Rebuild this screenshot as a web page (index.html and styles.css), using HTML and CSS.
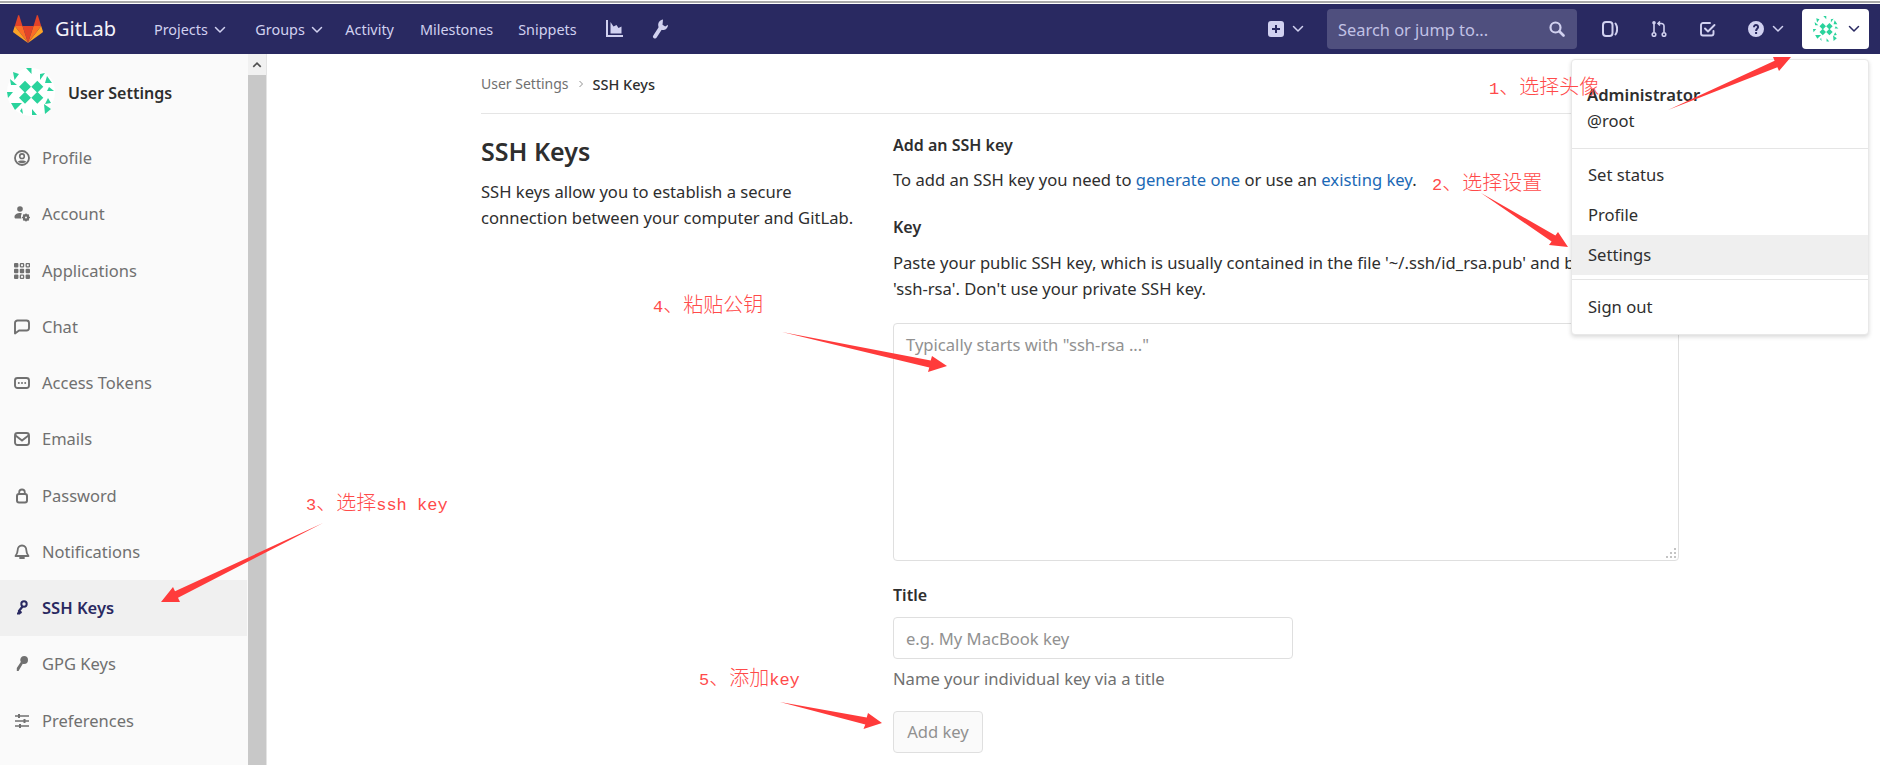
FILE: index.html
```html
<!DOCTYPE html>
<html lang="en">
<head>
    <meta charset="UTF-8">
    <meta name="viewport" content="width=device-width, initial-scale=1.0">
    <title>SSH Keys · User Settings · GitLab</title>
    <link rel="stylesheet" href="styles.css">
</head>
<body>
    <svg class="defs" width="0" height="0">
        <symbol id="chevron" viewBox="0 0 16 16"><path d="M3.500 5.500 8 10l4.500-4.500" fill="none" stroke="currentColor" stroke-width="1.500" stroke-linecap="round" stroke-linejoin="round"/></symbol>
        <symbol id="identicon" viewBox="0 0 48 48">
            <circle cx="24" cy="24" r="24" fill="#fff"/>
            <g fill="#2ad39c">
                <path d="M18 12.700 24 18.700 18 24.700 12 18.700ZM30.300 12.700 36.300 18.700 30.300 24.700 24.300 18.700ZM18 23.700 24 29.700 18 35.700 12 29.700ZM30.300 23.700 36.300 29.700 30.300 35.700 24.300 29.700Z"/>
                <path d="M19 0h5.500v6ZM6 4l6 2-4.500 6ZM33 6l5-1-5 7ZM40 8l5 7h-7ZM3 11l7 6h-6ZM42 19l5 4h-7ZM0 24h6l-5 6ZM41 30l3 5-6 1ZM4 35h11l-7 7ZM37 36l7 5-6 5ZM25 41l5 6h-5ZM15 40l-2 3 3 3Z"/>
            </g>
        </symbol>
    </svg>

    <div class="top-strip"></div>

    <header class="navbar">
        <a class="brand">
            <svg class="brand-logo" viewBox="0 0 30 28">
                <path fill="#e24329" d="M15 28 20.500 11h-11Z"/>
                <path fill="#fc6d26" d="M15 28 9.500 11H1.800Z"/>
                <path fill="#fca326" d="M1.800 11 .1 16.200c-.2.500 0 1 .4 1.300L15 28Z"/>
                <path fill="#e24329" d="M1.800 11h7.700L6.200.6c-.2-.500-.9-.500-1.100 0Z"/>
                <path fill="#fc6d26" d="M15 28 20.500 11h7.700Z"/>
                <path fill="#fca326" d="M28.200 11l1.700 5.200c.2.500 0 1-.4 1.300L15 28Z"/>
                <path fill="#e24329" d="M28.200 11h-7.700L23.800.6c.2-.500.9-.500 1.100 0Z"/>
            </svg>
            <span class="brand-name">GitLab</span>
        </a>
        <nav class="nav-links">
            <a class="nav-link nav-projects">Projects <svg class="chev"><use href="#chevron"/></svg></a>
            <a class="nav-link nav-groups">Groups <svg class="chev"><use href="#chevron"/></svg></a>
            <a class="nav-link nav-activity">Activity</a>
            <a class="nav-link">Milestones</a>
            <a class="nav-link">Snippets</a>
            <a class="nav-glyph nav-chart">
                <svg class="glyph-chart" viewBox="0 0 18 18"><path fill="none" stroke="currentColor" stroke-width="2" d="M2 0v16h16"/><path fill="currentColor" d="M5.500 2 8.500 6.500 11.500 5l2 3 3-1.500V13.500H5.500Z"/></svg>
            </a>
            <a class="nav-glyph nav-wrench">
                <svg class="glyph-wrench" viewBox="0 0 16 20"><path d="M3 17.500 8.800 8.500" stroke="currentColor" stroke-width="4" stroke-linecap="round"/><path fill="currentColor" d="M11 .5C8 .9 6 3.300 6.200 6.200c.1 2.800 2.600 5 5.500 4.800 2.600-.2 4.300-2.500 4.300-5.200l-2.800 1.700-2.700-1.800.3-2.800Z"/></svg>
            </a>
        </nav>
        <div class="nav-right">
            <a class="nav-plus">
                <svg class="nav-icon" viewBox="0 0 16 16"><path fill="currentColor" fill-rule="evenodd" d="M3 0h10a3 3 0 0 1 3 3v10a3 3 0 0 1-3 3H3a3 3 0 0 1-3-3V3a3 3 0 0 1 3-3Zm4 4v3H4v2h3v3h2V9h3V7H9V4Z"/></svg>
                <svg class="chev"><use href="#chevron"/></svg>
            </a>
            <div class="search">
                <span class="search-text">Search or jump to...</span>
                <svg class="search-icon" viewBox="0 0 16 16"><circle cx="6.500" cy="6.500" r="5" fill="none" stroke="currentColor" stroke-width="2.200"/><path d="m10.500 10.500 4 4" stroke="currentColor" stroke-width="2.600" stroke-linecap="round"/></svg>
            </div>
            <a class="nav-btn">
                <svg class="nav-icon" viewBox="0 0 16 16"><rect x="1" y="1" width="9.500" height="14" rx="3" fill="none" stroke="currentColor" stroke-width="2"/><path d="M13.500 2.500c2.200 3 2.200 8 0 11" fill="none" stroke="currentColor" stroke-width="2" stroke-linecap="round"/></svg>
            </a>
            <a class="nav-btn">
                <svg class="nav-icon" viewBox="0 0 16 16"><g fill="none" stroke="currentColor" stroke-width="1.600"><circle cx="3" cy="13.500" r="1.800"/><circle cx="13" cy="13.500" r="1.800"/><path d="M3 11.500V2M13 11.500V5a2.500 2.500 0 0 0-2.500-2.500H7.500"/><path d="M9 .5 7 2.500l2 2"/><circle cx="3" cy="1.800" r="1" fill="currentColor"/></g></svg>
            </a>
            <a class="nav-btn">
                <svg class="nav-icon" viewBox="0 0 16 16"><g fill="none" stroke="currentColor" stroke-width="1.900" stroke-linecap="round" stroke-linejoin="round"><path d="M10 2H3a2 2 0 0 0-2 2v8.500a2 2 0 0 0 2 2h8.500a2 2 0 0 0 2-2V10"/><path d="m5 7.500 3 3L14.500 4"/></g></svg>
            </a>
            <a class="nav-help">
                <svg class="nav-icon" viewBox="0 0 16 16"><path fill="currentColor" fill-rule="evenodd" d="M8 0a8 8 0 1 1 0 16A8 8 0 0 1 8 0Zm-.900 11v2.100h2V11ZM5 6.200h2c0-.800.400-1.200 1-1.200s1 .400 1 1c0 1.100-1.900 1.500-1.900 3.900h2c0-1.700 2-2.100 2-4C11 4 9.700 3 8 3 6.200 3 5 4.300 5 6.200Z"/></svg>
                <svg class="chev"><use href="#chevron"/></svg>
            </a>
            <a class="nav-avatar">
                <svg class="nav-avatar-img"><use href="#identicon"/></svg>
                <svg class="chev"><use href="#chevron"/></svg>
            </a>
        </div>
    </header>

    <div class="layout">
        <aside class="sidebar">
            <div class="sidebar-head">
                <svg class="sidebar-avatar"><use href="#identicon"/></svg>
                <strong>User Settings</strong>
            </div>
            <ul class="side-list">
                <li class="side-item">
                    <svg class="side-icon" viewBox="0 0 16 16"><circle cx="8" cy="8" r="7" fill="none" stroke="currentColor" stroke-width="1.800"/><circle cx="8" cy="6.200" r="2.300" fill="none" stroke="currentColor" stroke-width="1.600"/><path d="M3.800 11.500C5 10 11 10 12.200 11.500 11 13.800 5 13.800 3.800 11.500Z" fill="currentColor"/></svg>
                    Profile
                </li>
                <li class="side-item">
                    <svg class="side-icon" viewBox="0 0 16 16"><circle cx="6" cy="3" r="2.800" fill="currentColor"/><path d="M6.500 7C3 7 .5 8.500.5 11c0 1 .6 1.600 1.500 1.600h5.500C6.500 10.500 7 8.500 8 7.500Z" fill="currentColor"/><circle cx="12" cy="11.500" r="2.300" fill="none" stroke="currentColor" stroke-width="2.200"/><path d="M12 7.500v8M8 11.500h8M9.200 8.700l5.600 5.600M14.800 8.700l-5.600 5.600" stroke="currentColor" stroke-width="1.200"/><circle cx="12" cy="11.500" r="1" fill="#fafafa"/></svg>
                    Account
                </li>
                <li class="side-item">
                    <svg class="side-icon" viewBox="0 0 16 16"><g fill="currentColor"><rect x="0" y="0" width="4.400" height="4.400" rx="1"/><rect x="5.800" y="5.800" width="4.400" height="4.400" rx="1"/><rect x="11.600" y="5.800" width="4.400" height="4.400" rx="1"/><rect x="0" y="5.800" width="4.400" height="4.400" rx="1"/><rect x="0" y="11.600" width="4.400" height="4.400" rx="1"/><rect x="11.600" y="11.600" width="4.400" height="4.400" rx="1"/></g><g fill="none" stroke="currentColor" stroke-width="1.300"><rect x="6.400" y=".6" width="3.200" height="3.200" rx=".6"/><rect x="12.200" y=".6" width="3.200" height="3.200" rx=".6"/><rect x="6.400" y="12.200" width="3.200" height="3.200" rx=".6"/></g></svg>
                    Applications
                </li>
                <li class="side-item">
                    <svg class="side-icon" viewBox="0 0 16 16"><path d="M3.500 1.500h9a2.500 2.500 0 0 1 2.500 2.500v5a2.500 2.500 0 0 1-2.500 2.500H5L1 14.500V4a2.500 2.500 0 0 1 2.500-2.500Z" fill="none" stroke="currentColor" stroke-width="1.900" stroke-linejoin="round"/></svg>
                    Chat
                </li>
                <li class="side-item">
                    <svg class="side-icon" viewBox="0 0 16 16"><rect x="1" y="3" width="14" height="10" rx="2.500" fill="none" stroke="currentColor" stroke-width="1.900"/><g fill="currentColor"><circle cx="4.800" cy="8" r="1"/><circle cx="8" cy="8" r="1"/><circle cx="11.200" cy="8" r="1"/></g></svg>
                    Access Tokens
                </li>
                <li class="side-item">
                    <svg class="side-icon" viewBox="0 0 16 16"><rect x="1" y="2" width="14" height="12" rx="2.500" fill="none" stroke="currentColor" stroke-width="1.900"/><path d="m1.500 4.500 6.500 5 6.500-5" fill="none" stroke="currentColor" stroke-width="1.900"/></svg>
                    Emails
                </li>
                <li class="side-item">
                    <svg class="side-icon" viewBox="0 0 16 16"><rect x="3" y="6" width="10" height="8.500" rx="2" fill="none" stroke="currentColor" stroke-width="2"/><path d="M5.200 6.500V4.300a2.800 2.800 0 0 1 5.600 0v2.200" fill="none" stroke="currentColor" stroke-width="1.800"/></svg>
                    Password
                </li>
                <li class="side-item">
                    <svg class="side-icon" viewBox="0 0 16 16"><path d="M8 1.500c2.800 0 4.300 2 4.300 4.500 0 2.500.8 4 2.200 6H1.500c1.400-2 2.200-3.500 2.200-6 0-2.500 1.500-4.500 4.300-4.500Z" fill="none" stroke="currentColor" stroke-width="1.800" stroke-linejoin="round"/><path d="M6 14h4" stroke="currentColor" stroke-width="1.800" stroke-linecap="round"/></svg>
                    Notifications
                </li>
                <li class="side-item is-active">
                    <svg class="side-icon" viewBox="0 0 16 16"><circle cx="10" cy="4" r="2.700" fill="none" stroke="currentColor" stroke-width="2"/><path d="M8.500 6.500 5 11v2.500H3M5.500 11.500 7.500 13" fill="none" stroke="currentColor" stroke-width="2.200"/></svg>
                    SSH Keys
                </li>
                <li class="side-item">
                    <svg class="side-icon" viewBox="0 0 16 16"><path d="M10 0a4 4 0 0 1 0 8c-.5 0-.8 0-1.200-.2L4.500 15H2.800v-3l4-6A4 4 0 0 1 10 0Z" fill="currentColor"/></svg>
                    GPG Keys
                </li>
                <li class="side-item">
                    <svg class="side-icon" viewBox="0 0 16 16"><path d="M1 3h14M1 8h14M1 13h14" stroke="currentColor" stroke-width="1.600"/><path d="M5 1v4M10.500 6v4M6 11v4" stroke="currentColor" stroke-width="2"/></svg>
                    Preferences
                </li>
            </ul>
        </aside>
        <div class="scrollbar">
            <div class="scroll-up"><svg class="chev-up" viewBox="0 0 16 16"><path d="M3 10.500 8 5.500l5 5" fill="none" stroke="#505050" stroke-width="2.200"/></svg></div>
        </div>

        <main class="content">
            <div class="breadcrumbs">
                <span class="crumb">User Settings</span>
                <svg class="crumb-sep" viewBox="0 0 8 8"><path d="M2.500 1 5.500 4l-3 3" fill="none" stroke="#919191" stroke-width="1"/></svg>
                <span class="crumb-last">SSH Keys</span>
            </div>
            <div class="settings-row">
                <div class="settings-intro">
                    <h4>SSH Keys</h4>
                    <p>SSH keys allow you to establish a secure connection between your computer and GitLab.</p>
                </div>
                <form class="settings-form">
                    <h5>Add an SSH key</h5>
                    <p class="form-line">To add an SSH key you need to <a class="link">generate one</a> or use an <a class="link">existing key</a>.</p>
                    <label class="label-key" for="key">Key</label>
                    <p class="form-help">Paste your public SSH key, which is usually contained in the file '~/.ssh/id_rsa.pub' and begins with<br>'ssh-rsa'. Don't use your private SSH key.</p>
                    <div class="key-box">
                        <textarea id="key" placeholder='Typically starts with "ssh-rsa ..."'></textarea>
                    </div>
                    <label class="label-title" for="title">Title</label>
                    <input type="text" id="title" placeholder="e.g. My MacBook key">
                    <p class="hint">Name your individual key via a title</p>
                    <button type="button">Add key</button>
                </form>
            </div>
        </main>
    </div>

    <div class="user-menu">
        <div class="user-head">
            <strong>Administrator</strong>
            <span>@root</span>
        </div>
        <div class="menu-divider menu-divider-a"></div>
        <a class="menu-item">Set status</a>
        <a class="menu-item">Profile</a>
        <a class="menu-item is-hover">Settings</a>
        <div class="menu-divider menu-divider-b"></div>
        <a class="menu-item">Sign out</a>
    </div>

    <!-- red notes drawn on top of the screenshot -->
    <svg class="arrows" viewBox="0 0 1880 765">
        <polygon points="1668,110 1774.600,60.800 1773,57 1791,57 1779,71 1777.400,67.200"/>
        <polygon points="1481,193 1555.400,235.500 1558,232 1568,247 1549,245 1551.600,241.500"/>
        <polygon points="323,523 175,591.300 173,587 161,602 180,602 178,597.700"/>
        <polygon points="782,332 930.700,360.600 932,356 947,366 928,372 929.300,367.400"/>
        <polygon points="780,702 866.700,717.600 868,713 882,723 863.500,729 865.300,724.400"/>
    </svg>
    <span class="note note-1"><span class="note-latin">1</span>、选择头像</span>
    <span class="note note-2"><span class="note-latin">2</span>、选择设置</span>
    <span class="note note-3"><span class="note-latin">3</span>、选择<span class="note-latin">ssh key</span></span>
    <span class="note note-4"><span class="note-latin">4</span>、粘贴公钥</span>
    <span class="note note-5"><span class="note-latin">5</span>、添加<span class="note-latin">key</span></span>
</body>
</html>
```

FILE: styles.css
```css
* {
    box-sizing: border-box;
}
html, body {
    height: 100%;
}
body {
    margin: 0;
    position: relative;
    overflow: hidden;
    font-family: "Noto Sans", "Open Sans", sans-serif;
    font-size: 16.6px;
    line-height: 26px;
    color: #2e2e2e;
    background: #fff;
}
.defs {
    position: absolute;
}
.top-strip {
    height: 4px;
    background: #fff;
    border-top: 1px solid #fff;
}
.top-strip::before {
    content: "";
    display: block;
    height: 2px;
    background: #a9a9a9;
}

/* top bar */
.navbar {
    display: flex;
    align-items: center;
    height: 50px;
    padding: 0 11px 0 13px;
    background: #292961;
    color: #d1d1f0;
}
.brand {
    display: flex;
    align-items: center;
    color: #fff;
}
.brand-logo {
    width: 30px;
    height: 28px;
}
.brand-name {
    margin-left: 12px;
    font-size: 20px;
    color: #f4f4fb;
}
.nav-links {
    display: flex;
    align-items: center;
    gap: 25px;
    margin-left: 38px;
    font-size: 14.4px;
}
.nav-link {
    display: flex;
    align-items: center;
    gap: 4px;
    padding-top: 2px;
}
.nav-projects {
    margin-right: 2.500px;
}
.nav-groups {
    margin-right: -4.500px;
}
.nav-activity {
    margin-right: 1px;
}
.nav-glyph {
    display: flex;
    align-items: center;
}
.chev {
    width: 16px;
    height: 16px;
    color: #d1d1f0;
}
.nav-icon {
    width: 16px;
    height: 16px;
    color: #d1d1f0;
}
.glyph-chart {
    width: 18px;
    height: 18px;
}
.glyph-wrench {
    width: 16px;
    height: 20px;
}
.nav-chart {
    margin-left: 3px;
}
.nav-wrench {
    margin-left: 4px;
}
.nav-right {
    display: flex;
    align-items: center;
    margin-left: auto;
}
.nav-plus {
    display: flex;
    align-items: center;
    gap: 6px;
}
.search {
    display: flex;
    align-items: center;
    justify-content: space-between;
    width: 250px;
    height: 40px;
    margin-left: 21px;
    padding: 0 12px 0 11px;
    border-radius: 4px;
    background: #4f4f7e;
    font-size: 16.4px;
    color: #c2c2e6;
}
.search-text {
    padding-top: 2px;
}
.search-icon {
    width: 16px;
    height: 16px;
    color: #d1d1f0;
}
.nav-btn {
    display: flex;
    justify-content: center;
    width: 49px;
    margin-left: 0;
}
.search + .nav-btn {
    margin-left: 8px;
}
.nav-help {
    display: flex;
    align-items: center;
    gap: 6px;
    margin-left: 16px;
}
.nav-avatar {
    display: flex;
    align-items: center;
    gap: 7px;
    width: 67px;
    height: 40px;
    margin-left: 16px;
    padding-left: 11px;
    border-radius: 4px;
    background: #fff;
}
.nav-avatar .chev {
    color: #292961;
}
.nav-avatar-img {
    width: 26px;
    height: 26px;
}

/* page under the bar */
.layout {
    display: flex;
    height: 711px;
}
.sidebar {
    width: 248px;
    flex: none;
    background: #fafafa;
    color: #707070;
}
.sidebar-head {
    display: flex;
    align-items: flex-start;
    gap: 13px;
    height: 76px;
    padding: 14px 0 0 7px;
    color: #2e2e2e;
}
.sidebar-head strong {
    font-weight: 600;
    font-size: 16px;
    line-height: 50px;
}
.sidebar-avatar {
    width: 48px;
    height: 48px;
}
.side-list {
    margin: 0;
    padding: 0;
    list-style: none;
}
.side-item {
    display: flex;
    align-items: center;
    gap: 12px;
    height: 56.25px;
    padding-left: 14px;
    font-size: 16.5px;
}
.side-icon {
    width: 16px;
    height: 16px;
    flex: none;
}
.side-item.is-active {
    width: 247px;
    background: #f0f0f0;
    color: #292961;
    font-weight: 600;
}
.scrollbar {
    width: 19px;
    flex: none;
    background: #c8c8c8;
    border-right: 1px solid #e4e4e4;
}
.scroll-up {
    display: flex;
    align-items: center;
    justify-content: center;
    height: 21px;
    background: #f1f1f1;
}
.chev-up {
    width: 12px;
    height: 12px;
}

/* main column */
.content {
    flex: none;
    width: 1198px;
    margin-left: 214px;
}
.breadcrumbs {
    display: flex;
    align-items: center;
    gap: 8px;
    height: 60px;
    padding-top: 1px;
    border-bottom: 1px solid #e5e5e5;
    font-size: 14px;
}
.crumb {
    color: #707070;
}
.crumb-sep {
    width: 8px;
    height: 8px;
}
.crumb-last {
    color: #2e2e2e;
    font-size: 14.500px;
    font-weight: 500;
}
.settings-row {
    display: flex;
}
.settings-intro {
    width: 412px;
    flex: none;
    padding-right: 28px;
    padding-top: 18px;
}
h4 {
    margin: 0;
    font-size: 25px;
    line-height: 38px;
    font-weight: 600;
}
.settings-intro p {
    margin: 9px 0 0;
}
.settings-form {
    flex: 1;
    padding-top: 18px;
}
h5 {
    margin: 0;
    font-size: 16px;
    line-height: 26px;
    font-weight: 600;
}
.form-line {
    margin: 9px 0 0;
    white-space: nowrap;
}
.link {
    color: #1b69b6;
}
label {
    display: block;
    font-weight: 600;
    font-size: 16px;
}
.label-key {
    margin-top: 21px;
}
/* runs under the user menu, cut at its edge */
.form-help {
    width: 678px;
    margin: 10px 0 0;
    overflow: hidden;
    white-space: nowrap;
}
.key-box {
    position: relative;
    margin-top: 21px;
}
/* dotted grip instead of the browser's resize lines */
.key-box::after {
    content: "";
    position: absolute;
    right: 3px;
    bottom: 3px;
    width: 2px;
    height: 2px;
    background: #c4c4c4;
    box-shadow: -4px 0 #c4c4c4, -8px 0 #c4c4c4, 0 -4px #c4c4c4, -4px -4px #c4c4c4, 0 -8px #c4c4c4;
}
textarea {
    display: block;
    width: 100%;
    height: 238px;
    padding: 8px 12px;
    border: 1px solid #dfdfdf;
    border-radius: 4px;
    font: inherit;
    color: inherit;
    resize: none;
}
input {
    display: block;
    width: 400px;
    height: 42px;
    margin-top: 9px;
    padding: 0 12px;
    border: 1px solid #dfdfdf;
    border-radius: 4px;
    font: inherit;
}
textarea::placeholder, input::placeholder {
    color: #919191;
    opacity: 1;
}
.label-title {
    margin-top: 21px;
}
.hint {
    margin: 7px 0 0;
    color: #707070;
}
button {
    display: block;
    width: 90px;
    height: 42px;
    margin-top: 19px;
    padding: 0;
    border: 1px solid #dfdfdf;
    border-radius: 4px;
    background: #fafafa;
    font: inherit;
    color: #919191;
}

/* user dropdown */
.user-menu {
    position: absolute;
    top: 59px;
    left: 1571px;
    width: 298px;
    height: 276px;
    padding-top: 22px;
    background: #fff;
    border: 1px solid #e8e8e8;
    border-radius: 4px;
    box-shadow: 0 2px 4px rgba(0,0,0,0.15);
}
.user-head {
    display: flex;
    flex-direction: column;
    padding-left: 15px;
}
.user-head strong {
    font-weight: 600;
}
.menu-divider {
    height: 1px;
    background: #e5e5e5;
}
.menu-divider-a {
    margin: 14px 0 6px;
}
.menu-divider-b {
    margin: 4px 0 7px;
}
.menu-item {
    display: flex;
    align-items: center;
    height: 40px;
    padding-left: 16px;
}
.menu-item.is-hover {
    background: #efefef;
}

/* annotations */
.arrows {
    position: absolute;
    top: 0;
    left: 0;
    width: 1880px;
    height: 765px;
    pointer-events: none;
}
.arrows polygon {
    fill: #ff3b3b;
}
.note {
    position: absolute;
    font-family: "Noto Sans CJK SC", sans-serif;
    font-size: 20px;
    line-height: 24px;
    font-weight: 300;
    color: #ff4a4a;
    white-space: nowrap;
}
.note-latin {
    font-family: "Liberation Mono", monospace;
    font-size: 17px;
}
.note-1 {
    top: 74px;
    left: 1489px;
}
.note-2 {
    top: 170px;
    left: 1432px;
}
.note-3 {
    top: 490px;
    left: 306px;
}
.note-4 {
    top: 292px;
    left: 653px;
}
.note-5 {
    top: 665px;
    left: 699px;
}
```
